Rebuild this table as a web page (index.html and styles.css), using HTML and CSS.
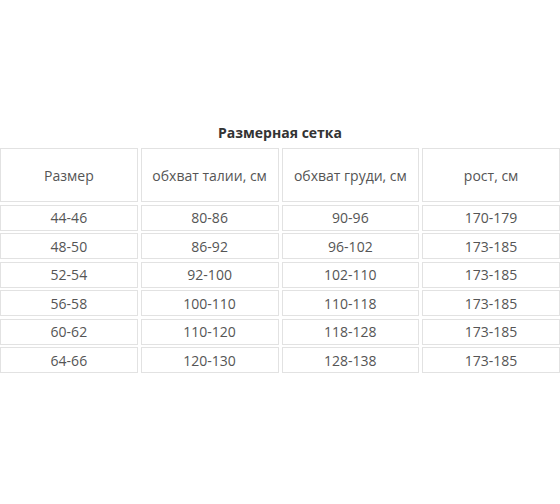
FILE: index.html
```html
<!DOCTYPE html>
<html lang="ru">
<head>
<meta charset="utf-8">
<title>Размерная сетка</title>
<link rel="stylesheet" href="styles.css">
</head>
<body>
<div class="page">
  <h2 class="title">Размерная сетка</h2>
  <div class="grid">
    <div class="cell head">Размер</div>
    <div class="cell head">обхват талии, см</div>
    <div class="cell head">обхват груди, см</div>
    <div class="cell head">рост, см</div>

    <div class="cell">44-46</div><div class="cell">80-86</div><div class="cell">90-96</div><div class="cell">170-179</div>
    <div class="cell">48-50</div><div class="cell">86-92</div><div class="cell">96-102</div><div class="cell">173-185</div>
    <div class="cell">52-54</div><div class="cell">92-100</div><div class="cell">102-110</div><div class="cell">173-185</div>
    <div class="cell">56-58</div><div class="cell">100-110</div><div class="cell">110-118</div><div class="cell">173-185</div>
    <div class="cell">60-62</div><div class="cell">110-120</div><div class="cell">118-128</div><div class="cell">173-185</div>
    <div class="cell">64-66</div><div class="cell">120-130</div><div class="cell">128-138</div><div class="cell">173-185</div>
  </div>
</div>
</body>
</html>
```

FILE: styles.css
```css
html, body {
  margin: 0;
  padding: 0;
  background: #ffffff;
}
.page {
  width: 560px;
  height: 504px;
  font-family: "Open Sans", "Liberation Sans", sans-serif;
  color: #555555;
}
.title {
  margin: 0;
  padding-top: 122px;
  height: 26px;
  line-height: 22px;
  font-size: 14px;
  font-weight: 700;
  color: #333333;
  text-align: center;
  box-sizing: content-box;
}
.grid {
  display: grid;
  grid-template-columns: repeat(4, 1fr);
  grid-template-rows: 54px repeat(6, 26px);
  column-gap: 3px;
  row-gap: 2.5px;
}
.cell {
  border: 1px solid #e2e2e2;
  box-sizing: border-box;
  display: flex;
  align-items: center;
  justify-content: center;
  font-size: 14px;
  color: #555555;
}
```
